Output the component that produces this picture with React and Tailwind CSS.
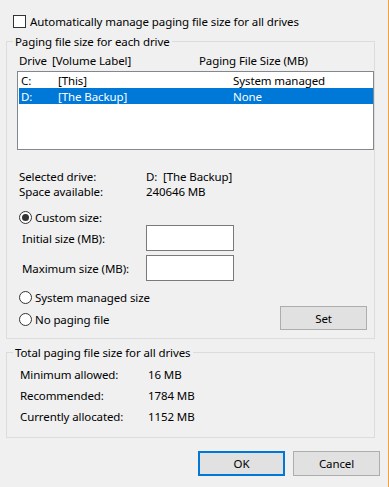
import React from 'react';

function Radio({ checked, label, className = '' }) {
  return (
    <div className={`flex items-center ${className}`}>
      <span className="w-[13px] h-[13px] rounded-full border border-[#333333] bg-white flex items-center justify-center shrink-0">
        {checked && <span className="w-[7px] h-[7px] rounded-full bg-[#333333]" />}
      </span>
      <span className="ml-[3px]">{label}</span>
    </div>
  );
}

function Button({ children, primary = false, className = '' }) {
  return (
    <div
      className={`w-[87px] flex items-center justify-center bg-[#e1e1e1] ${
        primary ? 'border-2 border-[#0078d7]' : 'border border-[#adadad]'
      } ${className}`}
    >
      {children}
    </div>
  );
}

export default function App() {
  return (
    <div className="w-[389px] h-[487px] bg-[#f0f0f0] border-r border-[#f0a33c] text-black text-[11.5px] tracking-[-0.1px] leading-[15px] font-['Noto_Sans',sans-serif] overflow-hidden">
      {/* Auto manage checkbox */}
      <div className="mt-[14px] h-[15px] pl-[13px] flex items-center gap-[4px]">
        <span className="w-[13px] h-[13px] border border-[#333333] bg-white shrink-0" />
        <span>Automatically manage paging file size for all drives</span>
      </div>

      {/* Per drive group */}
      <fieldset className="mt-[5px] ml-[6px] w-[369px] h-[305px] border border-[#dcdcdc]">
        <legend className="ml-[6px] px-[2px] leading-[15px]">Paging file size for each drive</legend>

        <div className="mt-[3px] h-[16px] pl-[12px] flex items-center">
          <span className="w-[33px]">Drive</span>
          <span className="w-[147px]">[Volume Label]</span>
          <span>Paging File Size (MB)</span>
        </div>

        <div className="mt-[3px] ml-[10px] w-[357px] h-[79px] bg-white border border-[#828790]">
          <div className="h-[16px] pl-[3px] flex items-center">
            <span className="w-[37px]">C:</span>
            <span className="w-[175px]">[This]</span>
            <span>System managed</span>
          </div>
          <div className="h-[16px] ml-[1px] pl-[2px] flex items-center bg-[#0078d7] text-white">
            <span className="w-[37px]">D:</span>
            <span className="w-[175px]">[The Backup]</span>
            <span>None</span>
          </div>
        </div>

        <div className="mt-[19px] pl-[12px]">
          <div className="h-[15px] flex items-center">
            <span className="w-[127px]">Selected drive:</span>
            <span>D:&nbsp;&nbsp;[The Backup]</span>
          </div>
          <div className="h-[15px] flex items-center">
            <span className="w-[127px]">Space available:</span>
            <span>240646 MB</span>
          </div>
        </div>

        <Radio checked label="Custom size:" className="mt-[11px] h-[15px] pl-[12px]" />

        <div className="h-[26px] pl-[15px] flex items-center">
          <span className="w-[124px]">Initial size (MB):</span>
          <span className="w-[88px] h-[26px] bg-white border border-[#7a7a7a]" />
        </div>
        <div className="mt-[4px] h-[26px] pl-[15px] flex items-center">
          <span className="w-[124px]">Maximum size (MB):</span>
          <span className="w-[88px] h-[26px] bg-white border border-[#7a7a7a]" />
        </div>

        <Radio label="System managed size" className="mt-[8px] h-[16px] pl-[12px]" />

        <div className="flex items-start pl-[12px]">
          <Radio label="No paging file" className="mt-[6px] h-[16px]" />
          <Button className="ml-auto mr-[7px] mt-[1px] h-[24px]">Set</Button>
        </div>
      </fieldset>

      {/* Totals group */}
      <fieldset className="mt-[6px] ml-[6px] w-[369px] h-[93px] border border-[#dcdcdc]">
        <legend className="ml-[6px] px-[2px] leading-[15px]">Total paging file size for all drives</legend>
        <div className="mt-[4px] pl-[13px]">
          {[
            ['Minimum allowed:', '16 MB'],
            ['Recommended:', '1784 MB'],
            ['Currently allocated:', '1152 MB'],
          ].map(([label, value]) => (
            <div key={label} className="h-[21px] flex items-center">
              <span className="w-[128px]">{label}</span>
              <span>{value}</span>
            </div>
          ))}
        </div>
      </fieldset>

      {/* Dialog buttons */}
      <div className="mt-[13px] pr-[8px] flex justify-end gap-[8px]">
        <Button primary className="h-[25px]">OK</Button>
        <Button className="h-[25px]">Cancel</Button>
      </div>
    </div>
  );
}
